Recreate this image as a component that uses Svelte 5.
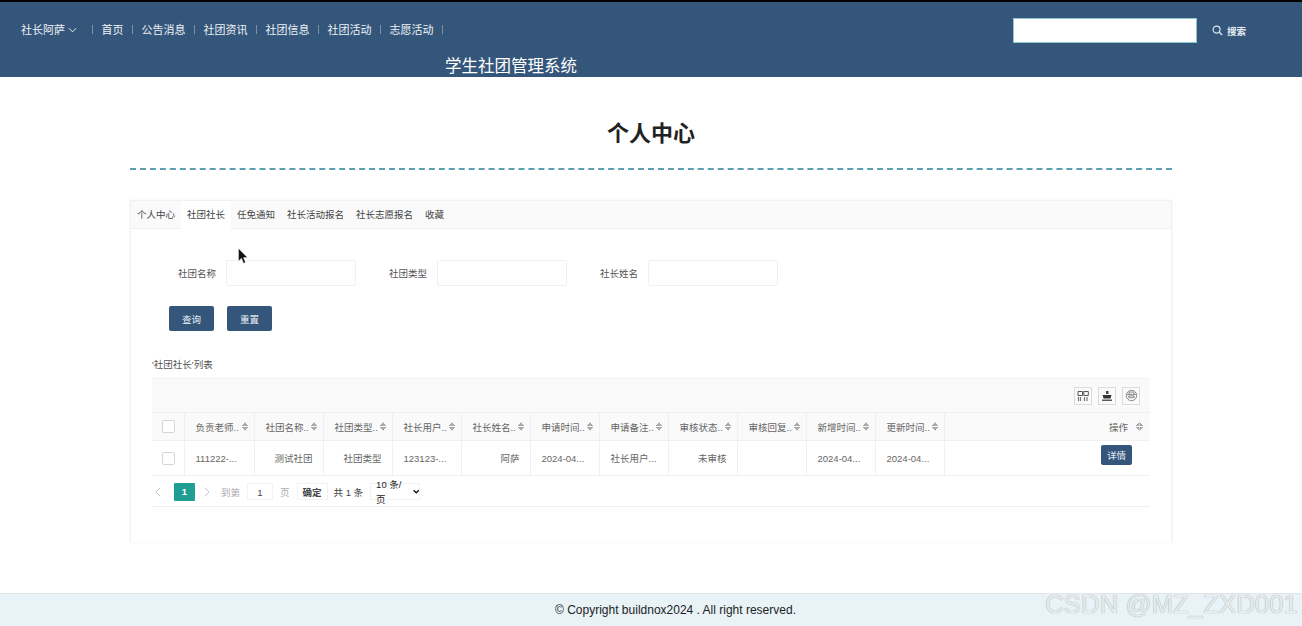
<script>
    const navItems = ["首页", "公告消息", "社团资讯", "社团信息", "社团活动", "志愿活动"];
    const tabs = ["个人中心", "社团社长", "任免通知", "社长活动报名", "社长志愿报名", "收藏"];
    const filters = ["社团名称", "社团类型", "社长姓名"];
    const colWidths = [70, 69, 69, 69, 69, 69, 69, 69, 69, 69, 69];
    const columns = [
        "负责老师..", "社团名称..", "社团类型..", "社长用户..", "社长姓名..", "申请时间..",
        "申请备注..", "审核状态..", "审核回复..", "新增时间..", "更新时间.."
    ];
    // right = right aligned cell, as the table shows plain text that fits
    const row = [
        { text: "111222-..." },
        { text: "测试社团", right: true },
        { text: "社团类型", right: true },
        { text: "123123-..." },
        { text: "阿萨", right: true },
        { text: "2024-04..." },
        { text: "社长用户..." },
        { text: "未审核", right: true },
        { text: "" },
        { text: "2024-04..." },
        { text: "2024-04..." }
    ];
</script>

<div class="page">
    <header class="topbar">
        <div class="topbar-row">
            <nav class="nav">
                <span class="user">社长阿萨
                    <svg class="chevron" viewBox="0 0 10 6" width="9" height="6">
                        <path d="M1 1l4 4 4-4" fill="none" stroke="#fff" stroke-width="1" />
                    </svg>
                </span>
                <span class="sep"></span>
                {#each navItems as item}
                    <span class="nav-item">{item}</span>
                    <span class="sep"></span>
                {/each}
            </nav>
            <div class="search">
                <div class="search-box"></div>
                <svg class="search-icon" viewBox="0 0 12 12" width="11" height="11">
                    <circle cx="5" cy="5" r="3.8" fill="none" stroke="#dfe6ee" stroke-width="1.3" />
                    <path d="M8 8l3 3" stroke="#dfe6ee" stroke-width="1.5" />
                </svg>
                <span class="search-label">搜索</span>
            </div>
        </div>
        <div class="site-title">学生社团管理系统</div>
    </header>

    <main class="main">
        <h1 class="heading">个人中心</h1>
        <div class="dashed"></div>

        <section class="card">
            <div class="tabs">
                {#each tabs as tab, i}
                    <span class="tab" class:active={i === 1}>{tab}</span>
                {/each}
            </div>

            <svg class="cursor" viewBox="0 0 10 16" width="10" height="16">
                <path d="M0.5 0.5v12.5l3-2.8 2 5 2-.8-2-4.8h4z" fill="#111" stroke="#fff" stroke-width="0.4" />
            </svg>

            <div class="filters">
                {#each filters as f}
                    <label class="filter-label" for={f}>{f}</label>
                    <input class="filter-input" id={f} />
                {/each}
            </div>

            <div class="actions">
                <button class="btn">查询</button>
                <button class="btn">重置</button>
            </div>

            <div class="list-title">'社团社长'列表</div>

            <div class="table-wrap">
                <div class="toolbar">
                    <span class="tool">
                        <svg viewBox="0 0 12 12" width="12" height="12">
                            <path d="M1 1.5h4.5v4H1zM6.8 1.5h4.5v4H6.8z" fill="none" stroke="#555" stroke-width="1" />
                            <path d="M1.5 7v4M3.5 7v4M7.5 7v4M10 7v4" stroke="#777" stroke-width="1.2" />
                        </svg>
                    </span>
                    <span class="tool">
                        <svg viewBox="0 0 12 12" width="12" height="12">
                            <path d="M5 1h2.5v3H5z" fill="#444" />
                            <path d="M1.5 5h9l-1 3.5h-7z" fill="#333" />
                            <path d="M1 10.2h10" stroke="#333" stroke-width="1.2" />
                        </svg>
                    </span>
                    <span class="tool">
                        <svg viewBox="0 0 12 12" width="13" height="13">
                            <circle cx="6" cy="6" r="4.8" fill="none" stroke="#888" stroke-width="0.9" />
                            <path d="M1.5 5h9M3.5 8h5v-1.6h-5zM3.8 4.8v-2h4.4v2" fill="none" stroke="#888" stroke-width="0.9" />
                        </svg>
                    </span>
                </div>

                <table class="grid">
                    <colgroup>
                        <col style="width: 32px" />
                        {#each colWidths as w}
                            <col style="width: {w}px" />
                        {/each}
                        <col />
                    </colgroup>
                    <thead>
                        <tr>
                            <th class="check-cell"><span class="check"></span></th>
                            {#each columns as col}
                                <th>
                                    <span class="th-inner">
                                        <span>{col}</span>
                                        <span class="sort"></span>
                                    </span>
                                </th>
                            {/each}
                            <th class="op-head">
                                <span class="th-inner op-inner">
                                    <span>操作</span>
                                    <span class="sort"></span>
                                </span>
                            </th>
                        </tr>
                    </thead>
                    <tbody>
                        <tr>
                            <td class="check-cell"><span class="check"></span></td>
                            {#each row as cell}
                                <td class:right={cell.right}>{cell.text}</td>
                            {/each}
                            <td class="op-cell"><button class="detail">详情</button></td>
                        </tr>
                    </tbody>
                </table>

                <div class="pager">
                    <svg class="arrow" viewBox="0 0 6 10" width="6" height="10">
                        <path d="M5 1L1 5l4 4" fill="none" stroke="#c9c9c9" stroke-width="1" />
                    </svg>
                    <span class="current">1</span>
                    <svg class="arrow next" viewBox="0 0 6 10" width="6" height="10">
                        <path d="M1 1l4 4-4 4" fill="none" stroke="#c9c9c9" stroke-width="1" />
                    </svg>
                    <span class="muted goto">到第</span>
                    <span class="page-input">1</span>
                    <span class="muted">页</span>
                    <span class="confirm">确定</span>
                    <span class="count">共 1 条</span>
                    <span class="size">10 条/页
                        <svg viewBox="0 0 10 6" width="7" height="5">
                            <path d="M1 1l4 4 4-4" fill="none" stroke="#111" stroke-width="2" />
                        </svg>
                    </span>
                </div>
            </div>
        </section>
    </main>

    <footer class="footer">
        <span class="copyright">© Copyright buildnox2024 . All right reserved.</span>
        <span class="watermark">CSDN @MZ_ZXD001</span>
    </footer>
</div>

<style>
    :global(body) {
        margin: 0;
        background: #fff;
    }

    .page {
        width: 1302px;
        height: 626px;
        overflow: hidden;
        position: relative;
        display: flex;
        flex-direction: column;
        font-family: "Liberation Sans", "Noto Sans CJK SC", sans-serif;
        color: #555;
    }

    .topbar {
        height: 75px;
        flex: none;
        background: #34567a;
        border-top: 2px solid #000;
        overflow: hidden;
        color: #fff;
    }

    .topbar-row {
        height: 54px;
        display: flex;
        align-items: flex-start;
        justify-content: space-between;
    }

    .nav {
        display: flex;
        align-items: center;
        height: 54px;
        padding-left: 21px;
        font-size: 11px;
        color: #eef2f6;
    }

    .user {
        display: flex;
        align-items: center;
        gap: 3px;
        margin-right: 15px;
    }

    .chevron {
        margin-top: 1px;
    }

    .nav-item {
        padding: 0 8.5px;
    }

    .sep {
        width: 1px;
        height: 9px;
        background: rgba(255, 255, 255, 0.35);
    }

    .search {
        display: flex;
        align-items: center;
        margin-top: 16px;
        margin-right: 56px;
    }

    .search-box {
        width: 182px;
        height: 23px;
        background: #fff;
        border: 1px solid #8cc7cf;
    }

    .search-icon {
        margin-left: 15px;
    }

    .search-label {
        margin-left: 4px;
        font-size: 9.5px;
        font-weight: 700;
        color: #e4eaf0;
    }

    .site-title {
        padding-left: 445px;
        font-size: 16.5px;
        line-height: 24px;
        margin-top: -2px;
        color: #fff;
    }

    .main {
        flex: 1;
        padding: 0 130px;
    }

    .heading {
        margin: 0;
        padding-top: 42px;
        text-align: center;
        font-size: 22px;
        line-height: 30px;
        font-weight: 700;
        color: #222;
    }

    .dashed {
        margin-top: 19px;
        border-top: 2px dashed #5f9fb4;
    }

    .card {
        position: relative;
        margin-top: 30px;
        width: 1042px;
        height: 342px;
        box-sizing: border-box;
        border: 1px solid #f1f1f1;
        border-bottom: none;
        box-shadow: 0 0 3px rgba(0, 0, 0, 0.05);
    }

    .tabs {
        display: flex;
        height: 27px;
        background: #fafafa;
        border-bottom: 1px solid #efefef;
    }

    .tab {
        padding: 0 6px;
        font-size: 9.5px;
        line-height: 28px;
        color: #444;
    }

    .tab.active {
        background: #fff;
        height: 28px;
    }

    .cursor {
        position: absolute;
        left: 107px;
        top: 47px;
    }

    .filters {
        display: flex;
        align-items: center;
        margin-top: 31px;
        padding-left: 14px;
    }

    .filter-label {
        width: 81px;
        box-sizing: border-box;
        padding-right: 10px;
        font-size: 9.5px;
        text-align: right;
        color: #555;
    }

    .filter-input {
        width: 130px;
        height: 26px;
        box-sizing: border-box;
        padding: 0;
        border: 1px solid #f0f0f0;
        border-radius: 2px;
        background: #fff;
    }

    .filter-input + .filter-label {
        width: 91px;
        margin-left: -10px;
        padding-right: 10px;
    }

    .actions {
        display: flex;
        gap: 13px;
        margin-top: 20px;
        padding-left: 38px;
    }

    .btn {
        width: 45px;
        height: 25px;
        padding: 0;
        border: none;
        border-radius: 2px;
        background: #34567a;
        color: #eef2f6;
        font: inherit;
        font-size: 9.5px;
    }

    .list-title {
        margin-top: 27px;
        margin-left: 21px;
        font-size: 9.5px;
        line-height: 14px;
        color: #555;
    }

    .table-wrap {
        width: 998px;
        margin-top: 6px;
        margin-left: 21px;
    }

    .toolbar {
        height: 33px;
        display: flex;
        align-items: center;
        justify-content: flex-end;
        gap: 6px;
        padding-right: 10px;
        background: #fafafa;
        border-top: 1px solid #f2f2f2;
    }

    .tool {
        width: 18px;
        height: 18px;
        box-sizing: border-box;
        border: 1px solid #dcdcdc;
        display: flex;
        align-items: center;
        justify-content: center;
    }

    .grid {
        width: 100%;
        border-collapse: collapse;
        table-layout: fixed;
        font-size: 9.5px;
        color: #666;
    }

    th,
    td {
        padding: 0 10px 0 11px;
        border: 1px solid #f0f0f0;
        border-left-color: #f3f3f3;
        font-weight: 400;
        text-align: left;
        white-space: nowrap;
        overflow: hidden;
    }

    tr > :first-child {
        border-left: none;
    }

    tr > :last-child {
        border-right: none;
    }

    th {
        height: 27px;
        background: #fafafa;
        padding-right: 5px;
    }

    td {
        height: 34px;
    }

    td.right {
        text-align: right;
    }

    .th-inner {
        display: flex;
        align-items: center;
        justify-content: space-between;
    }

    .op-inner {
        justify-content: flex-end;
        gap: 8px;
        padding-right: 2px;
    }

    .sort {
        width: 7px;
        height: 9px;
        flex: none;
        /* two small triangles for the sort control */
        background:
            linear-gradient(to bottom right, transparent 50%, #aaa 50%) 0 0 / 3.5px 4px no-repeat,
            linear-gradient(to bottom left, transparent 50%, #aaa 50%) 3.5px 0 / 3.5px 4px no-repeat,
            linear-gradient(to top right, transparent 50%, #aaa 50%) 0 5px / 3.5px 4px no-repeat,
            linear-gradient(to top left, transparent 50%, #aaa 50%) 3.5px 5px / 3.5px 4px no-repeat;
    }

    .check-cell {
        padding: 0;
        text-align: center;
    }

    .check {
        display: block;
        width: 13px;
        height: 13px;
        margin-left: 10px;
        border: 1px solid #d5d5d5;
        border-radius: 2px;
        box-sizing: border-box;
        background: #fff;
    }

    .op-cell {
        position: relative;
        padding-right: 18px;
        text-align: right;
        vertical-align: top;
    }

    .detail {
        width: 31px;
        height: 20px;
        margin-top: 4px;
        padding: 0;
        border: none;
        border-radius: 2px;
        background: #34567a;
        color: #e8edf3;
        font: inherit;
        font-size: 9.5px;
    }

    .pager {
        height: 31px;
        display: flex;
        align-items: center;
        padding-left: 3px;
        padding-top: 1px;
        box-sizing: border-box;
        border-bottom: 1px solid #eee;
        font-size: 9.5px;
        color: #444;
    }

    .arrow {
        margin-right: 13px;
    }

    .next {
        margin-left: 9px;
        margin-right: 11px;
    }

    .current {
        width: 21px;
        height: 18px;
        line-height: 18px;
        text-align: center;
        color: #fff;
        font-weight: 700;
        background: #1f9e94;
        border-radius: 1px;
        margin-top: 1px;
    }

    .muted {
        color: #aaa;
    }

    .goto {
        margin-right: 7px;
    }

    .page-input {
        width: 26px;
        height: 17px;
        line-height: 17px;
        box-sizing: border-box;
        border: 1px solid #f2f2f2;
        text-align: center;
        margin-right: 7px;
    }

    .confirm {
        width: 31px;
        height: 17px;
        line-height: 17px;
        margin-left: 7px;
        box-sizing: border-box;
        border: 1px solid #f2f2f2;
        text-align: center;
        font-weight: 700;
    }

    .count {
        margin-left: 6px;
    }

    .size {
        width: 50px;
        height: 17px;
        line-height: 15px;
        margin-left: 7px;
        box-sizing: border-box;
        border: 1px solid #f2f2f2;
        padding-left: 5px;
        display: flex;
        align-items: center;
        gap: 4px;
        color: #222;
    }

    .footer {
        height: 33px;
        flex: none;
        box-sizing: border-box;
        border-top: 1px solid #dfe6ea;
        background: #e8f2f7;
        padding-left: 555px;
        position: relative;
        display: flex;
        align-items: center;
    }

    .copyright {
        font-size: 12px;
        color: #222;
    }

    .watermark {
        position: absolute;
        right: 4px;
        top: -3px;
        font-size: 25.5px;
        line-height: 27px;
        letter-spacing: 0.2px;
        color: #e6ecef;
        text-shadow: 0 0 1px #8a8a8a;
    }
</style>
